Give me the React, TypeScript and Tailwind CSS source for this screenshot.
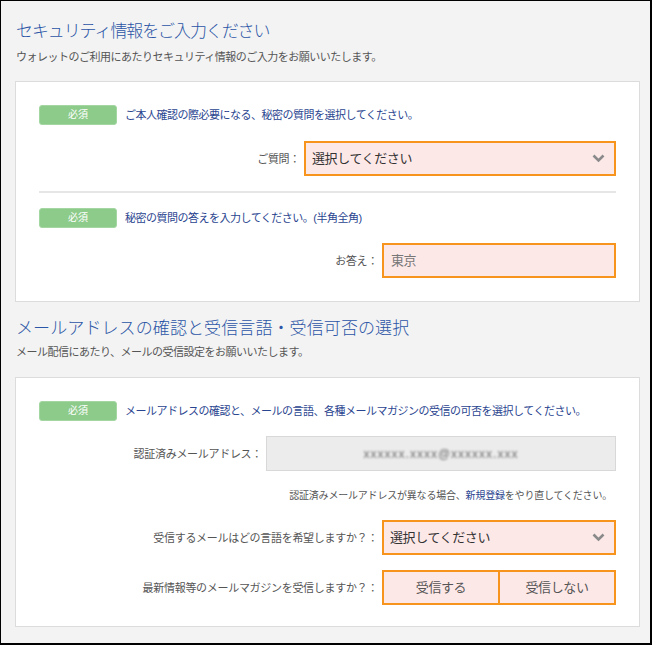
import React from "react";

function Badge() {
  return (
    <span className="flex h-[20px] w-[78px] shrink-0 items-center justify-center rounded-[3px] border border-[#a3d6a1] bg-[#8dcb8b] text-[10px] leading-none text-white">
      必須
    </span>
  );
}

function Lead({ children }: { children: React.ReactNode }) {
  return (
    <div className="flex items-center gap-[8px]">
      <Badge />
      <p className="text-[11px] leading-4 tracking-[-0.5px] text-[#2a4590]">{children}</p>
    </div>
  );
}

function Row({
  label,
  width,
  children,
  className = "",
}: {
  label: string;
  width: string;
  children: React.ReactNode;
  className?: string;
}) {
  return (
    <div className={`flex items-center justify-end gap-[4px] ${className}`}>
      <span className="text-[11px] leading-4 tracking-[-0.3px] text-[#555]">{label}</span>
      <div className={width}>{children}</div>
    </div>
  );
}

function Chevron() {
  return (
    <svg width="13" height="9" viewBox="0 0 13 9" className="shrink-0">
      <polyline
        points="1.5,1.5 6.5,6.5 11.5,1.5"
        fill="none"
        stroke="#8a8a8a"
        strokeWidth="2.6"
      />
    </svg>
  );
}

function SelectBox() {
  return (
    <div className="flex h-[35px] items-center justify-between border-2 border-[#f7941d] bg-[#fde8e8] pl-[6px] pr-[9px]">
      <span className="text-[13px] tracking-[-0.4px] text-[#333]">選択してください</span>
      <Chevron />
    </div>
  );
}

function Card({ children, className = "" }: { children: React.ReactNode; className?: string }) {
  return (
    <section className={`ml-[14px] w-[625px] border border-[#dcdcdc] bg-white px-[23px] pt-[23px] ${className}`}>
      {children}
    </section>
  );
}

export default function App() {
  return (
    <div className="h-[645px] w-[652px] border-b-2 border-l border-r-2 border-t border-black bg-[#f3f3f3] font-['Liberation_Sans','Noto_Sans_CJK_JP',sans-serif]">
      <h1 className="ml-[15px] pt-[19px] text-[17px] font-light leading-6 tracking-[-1.1px] text-[#2b55a6]">
        セキュリティ情報をご入力ください
      </h1>
      <p className="ml-[15px] mt-[5px] text-[11px] leading-4 tracking-[-0.5px] text-[#555]">
        ウォレットのご利用にあたりセキュリティ情報のご入力をお願いいたします。
      </p>

      <div className="mt-[16px]">
        <Card className="pb-[23px]">
          <Lead>ご本人確認の際必要になる、秘密の質問を選択してください。</Lead>
          <Row label="ご質問：" width="w-[312px]" className="mt-[16px]">
            <SelectBox />
          </Row>
          <div className="mt-[15px] h-[2px] bg-[#e6e6e6]" />
          <div className="mt-[15px]">
            <Lead>秘密の質問の答えを入力してください。(半角全角)</Lead>
          </div>
          <Row label="お答え：" width="w-[234px]" className="mt-[15px]">
            <div className="flex h-[35px] items-center border-2 border-[#f7941d] bg-[#fde8e8] pl-[7px]">
              <span className="text-[13px] tracking-[-0.4px] text-[#777]">東京</span>
            </div>
          </Row>
        </Card>
      </div>

      <h2 className="ml-[15px] mt-[15px] text-[17px] font-light leading-6 tracking-[0.1px] text-[#2b55a6]">
        メールアドレスの確認と受信言語・受信可否の選択
      </h2>
      <p className="ml-[15px] mt-[3px] text-[11px] leading-4 tracking-[-0.5px] text-[#555]">
        メール配信にあたり、メールの受信設定をお願いいたします。
      </p>

      <div className="mt-[17px]">
        <Card className="pb-[21px]">
          <Lead>メールアドレスの確認と、メールの言語、各種メールマガジンの受信の可否を選択してください。</Lead>
          <Row label="認証済みメールアドレス：" width="w-[350px]" className="mt-[15px]">
            <div className="flex h-[35px] items-center justify-center border border-[#d8d8d8] bg-[#ececec]">
              <span className="select-none text-[12px] tracking-[1px] text-[#6f6f6f] blur-[1px]">
                xxxxxx.xxxx@xxxxxx.xxx
              </span>
            </div>
          </Row>
          <p className="mt-[17px] pr-[4px] text-right text-[10px] leading-4 tracking-[-0.2px] text-[#555]">
            認証済みメールアドレスが異なる場合、<span className="text-[#2a4590]">新規登録</span>をやり直してください。
          </p>
          <Row label="受信するメールはどの言語を希望しますか？：" width="w-[234px]" className="mt-[16px]">
            <SelectBox />
          </Row>
          <Row label="最新情報等のメールマガジンを受信しますか？：" width="w-[234px]" className="mt-[15px]">
            <div className="flex h-[35px] border-2 border-[#f7941d] bg-[#fde8e8]">
              <button className="flex flex-1 items-center justify-center border-r-2 border-[#f7941d] text-[13px] tracking-[-0.4px] text-[#555]">
                受信する
              </button>
              <button className="flex flex-1 items-center justify-center text-[13px] tracking-[-0.4px] text-[#555]">
                受信しない
              </button>
            </div>
          </Row>
        </Card>
      </div>
    </div>
  );
}
